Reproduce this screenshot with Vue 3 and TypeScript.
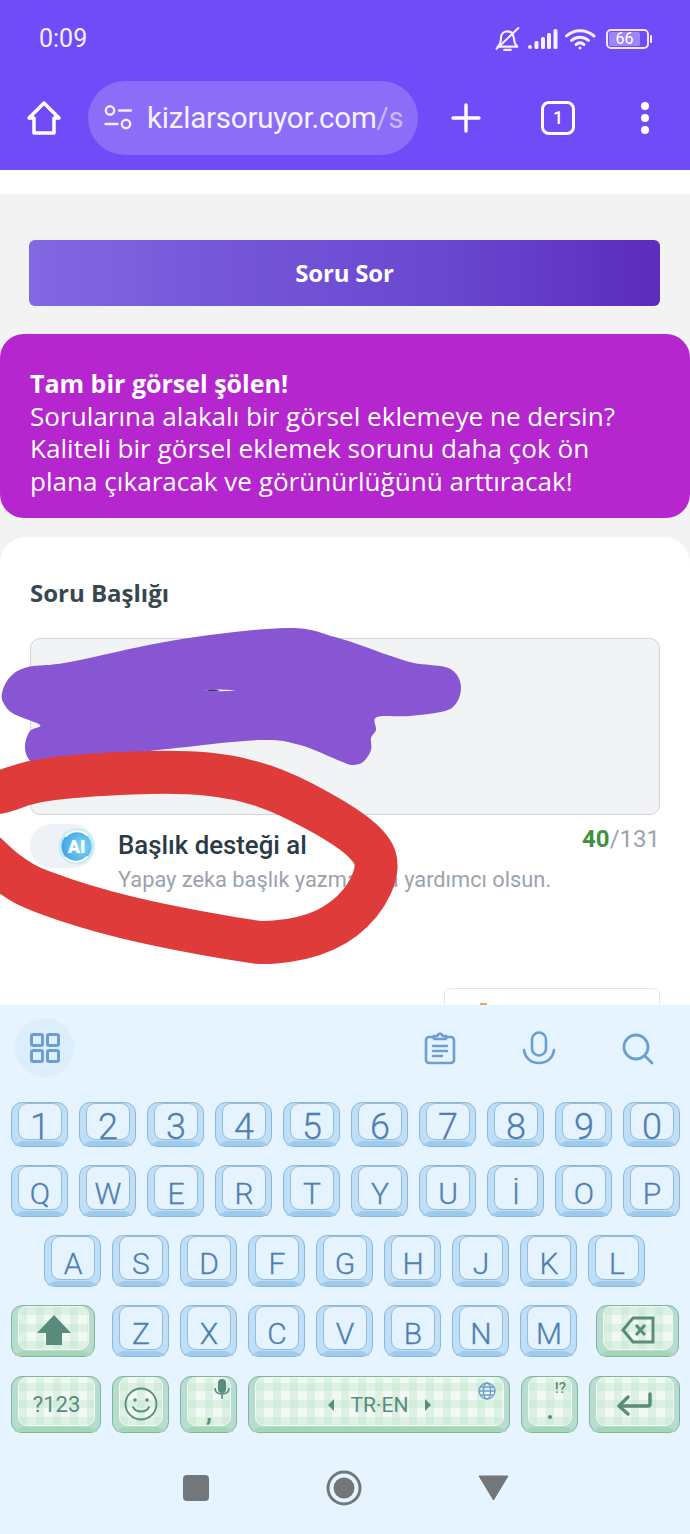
<script setup lang="ts">
type Pt = [number, number]
interface Key { label: string; cls?: string }

function smooth(p: Pt[], closed: boolean): string {
  const n = p.length
  const at = (i: number): Pt => (closed ? p[(i + n) % n] : p[Math.max(0, Math.min(n - 1, i))])
  let d = `M${p[0][0]} ${p[0][1]}`
  const last = closed ? n : n - 1
  for (let i = 0; i < last; i++) {
    const a = at(i - 1), b = at(i), c = at(i + 1), e = at(i + 2)
    const c1x = b[0] + (c[0] - a[0]) / 6, c1y = b[1] + (c[1] - a[1]) / 6
    const c2x = c[0] - (e[0] - b[0]) / 6, c2y = c[1] - (e[1] - b[1]) / 6
    d += `C${c1x.toFixed(1)} ${c1y.toFixed(1)} ${c2x.toFixed(1)} ${c2y.toFixed(1)} ${c[0]} ${c[1]}`
  }
  return closed ? d + 'Z' : d
}

const purple = smooth([
  [2, 693], [10, 677], [28, 667], [70, 662], [176, 640], [286, 628], [335, 637], [388, 655], [414, 663],
  [445, 667], [457, 675], [461, 688], [457, 702], [445, 711], [410, 716], [377, 717], [376, 730], [371, 738],
  [371, 750], [363, 762], [352, 765], [340, 761], [300, 745], [260, 740], [176, 748], [80, 760], [40, 765],
  [28, 758], [25, 745], [30, 731], [40, 725], [14, 714], [4, 704],
], true)

const red = smooth([
  [-40, 800], [0, 792], [44, 780], [132, 773], [207, 774], [264, 786], [320, 812], [364, 842], [376, 868],
  [360, 903], [325, 930], [275, 942], [230, 938], [125, 917], [46, 893], [8, 873], [-30, 838],
], false)

const digits = '1234567890'.split('')
const row2 = ['Q', 'W', 'E', 'R', 'T', 'Y', 'U', 'İ', 'O', 'P']
const row3 = ['A', 'S', 'D', 'F', 'G', 'H', 'J', 'K', 'L']
const row4: Key[] = ['Z', 'X', 'C', 'V', 'B', 'N', 'M'].map((label) => ({ label }))
</script>

<template>
  <div class="page">
    <header class="top">
      <div class="status">
        <span class="clock">0:09</span>
        <div class="status-icons">
          <svg width="25" height="24" viewBox="1 1 22 22" fill="none" stroke="#f3effe" stroke-width="1.900" stroke-linecap="round" stroke-linejoin="round">
            <path d="M3 19h18c-2-2-3-4-3-7l-1-4c-1-2-3-3-5-3-3 0-6 2-6 6 0 4-1 6-3 8Z" />
            <path d="M9 22h6" />
            <path d="M2 21 22 2" />
          </svg>
          <svg class="signal" width="30" height="22" viewBox="0 0 30 22" fill="#f3effe">
            <rect x="0" y="17" width="4" height="4" rx="2" />
            <rect x="6.500" y="13" width="4" height="8" rx="1.500" />
            <rect x="13" y="9" width="4" height="12" rx="1.500" />
            <rect x="19" y="5" width="4" height="16" rx="1.500" />
            <rect x="25.500" y="1" width="4" height="20" rx="1.500" />
          </svg>
          <svg class="wifi" width="32" height="24" viewBox="0 0 32 24" fill="none" stroke="#f3effe" stroke-width="3" stroke-linecap="round">
            <path d="M1.500 9C9 2 21 2 29 9" />
            <path d="M6.500 13.500c5-4.500 12-4.500 17 0" />
            <path d="M11 17.500c2.500-2 5.500-2 8 0" />
            <circle cx="15" cy="21" r="1.500" fill="#f3effe" stroke="none" />
          </svg>
          <div class="battery">
            <div class="cell"><span>66</span></div>
            <i class="nub"></i>
          </div>
        </div>
      </div>
      <div class="toolbar">
        <svg class="home" width="36" height="36" viewBox="0 0 36 36" fill="none" stroke="#fff" stroke-width="3.500" stroke-linejoin="round">
          <path d="M18 3 3 18h5v15h20V18h5L18 3Z" />
        </svg>
        <div class="url">
          <svg width="28" height="27" viewBox="0 0 28 27" fill="none" stroke="#f1edff" stroke-width="2.400" stroke-linecap="round">
            <circle cx="6" cy="6.500" r="4.200" />
            <path d="M15 6.500h12" />
            <path d="M1.500 20h12" />
            <circle cx="22" cy="20" r="4.200" />
          </svg>
          <span class="host">kizlarsoruyor.com<em>/s</em></span>
        </div>
        <svg class="plus" width="30" height="30" viewBox="0 0 30 30" stroke="#fff" stroke-width="3.400" stroke-linecap="round">
          <path d="M15 2v26M2 15h26" />
        </svg>
        <div class="tabs">1</div>
        <div class="dots"><i></i><i></i><i></i></div>
      </div>
    </header>

    <main class="main">
      <div class="white-band"></div>
      <div class="ask">Soru Sor</div>
      <section class="banner">
        <strong>Tam bir görsel şölen!</strong><br />
        Sorularına alakalı bir görsel eklemeye ne dersin?<br />
        Kaliteli bir görsel eklemek sorunu daha çok ön<br />
        plana çıkaracak ve görünürlüğünü arttıracak!
      </section>
      <section class="card">
        <h2>Soru Başlığı</h2>
        <div class="field"></div>
        <div class="helper">
          <div class="toggle">
            <svg width="37" height="37" viewBox="0 0 37 37">
              <defs>
                <radialGradient id="aiFill" cx="0.65" cy="0.5" r="0.7">
                  <stop offset="0" stop-color="#7fdcf3" />
                  <stop offset="1" stop-color="#3b9fe2" />
                </radialGradient>
              </defs>
              <circle cx="18.500" cy="18.500" r="18" fill="#c6ecf9" />
              <circle cx="18.500" cy="18.500" r="15" fill="url(#aiFill)" />
              <path d="M8 8c6-6 15-6 21-1M29 29c-6 6-15 6-21 1" fill="none" stroke="#fff" stroke-width="2" stroke-linecap="round" />
              <text x="18.500" y="25" text-anchor="middle" class="ai-text">AI</text>
            </svg>
          </div>
          <div class="helper-text">
            <div class="h-title">Başlık desteği al</div>
            <div class="h-sub">Yapay zeka başlık yazmanıza yardımcı olsun.</div>
          </div>
          <div class="count"><b>40</b>/131</div>
        </div>
        <div class="next-box"><i></i></div>
      </section>
    </main>

    <section class="kb">
      <div class="kb-tools">
        <div class="grid-btn">
          <svg width="30" height="30" viewBox="0 0 30 30" fill="none" stroke="#6c9fd0" stroke-width="3">
            <rect x="1.500" y="1.500" width="11" height="11" rx="1.500" />
            <rect x="17.500" y="1.500" width="11" height="11" rx="1.500" />
            <rect x="1.500" y="17.500" width="11" height="11" rx="1.500" />
            <rect x="17.500" y="17.500" width="11" height="11" rx="1.500" />
          </svg>
        </div>
        <svg class="t-clip" width="32" height="34" viewBox="0 0 32 34" fill="none" stroke="#6c9fd0" stroke-width="2.600" stroke-linecap="round" stroke-linejoin="round">
          <path d="M9 6H5a3 3 0 0 0-3 3v20a3 3 0 0 0 3 3h22a3 3 0 0 0 3-3V9a3 3 0 0 0-3-3h-4" />
          <path d="M10 8V5h3.500c.5-3 4.500-3 5 0H22v3Z" />
          <path d="M9 15h14M9 20h14M9 25h9" />
        </svg>
        <svg class="t-mic" width="34" height="34" viewBox="0 0 34 34" fill="none" stroke="#6c9fd0" stroke-width="2.600" stroke-linecap="round">
          <rect x="10" y="1.500" width="14" height="23" rx="7" />
          <path d="M2 19c1 8 7 13 15 13s14-5 15-13" />
        </svg>
        <svg class="t-search" width="32" height="32" viewBox="0 0 32 32" fill="none" stroke="#6c9fd0" stroke-width="2.800" stroke-linecap="round">
          <circle cx="14" cy="14" r="12" />
          <path d="m23 23 7 7" />
        </svg>
      </div>

      <div class="row r-digits">
        <div v-for="d in digits" :key="d" class="key blue"><div class="face digit">{{ d }}</div></div>
      </div>
      <div class="row">
        <div v-for="k in row2" :key="k" class="key blue"><div class="face letter">{{ k }}</div></div>
      </div>
      <div class="row r-home">
        <div v-for="k in row3" :key="k" class="key blue"><div class="face letter">{{ k }}</div></div>
      </div>
      <div class="row">
        <div class="key green k-shift">
          <div class="face lowered">
            <svg width="34" height="30" viewBox="0 0 34 30" fill="#5a8c7d"><path d="M17 0 34 18H25V30H9V18H0Z" /></svg>
          </div>
        </div>
        <div v-for="(k, i) in row4" :key="k.label" class="key blue" :class="{ 'k-z': i === 0 }">
          <div class="face letter">{{ k.label }}</div>
        </div>
        <div class="key green k-del">
          <div class="face lowered">
            <svg width="34" height="28" viewBox="0 0 34 28" fill="none" stroke="#5a8c7d" stroke-width="3">
              <path d="M32 2H12L2 14l10 12h20Z" stroke-linejoin="miter" />
              <path d="m15 9 9 10M24 9l-9 10" />
            </svg>
          </div>
        </div>
      </div>
      <div class="row r-last">
        <div class="key green k-num"><div class="face small">?123</div></div>
        <div class="key green">
          <div class="face lowered">
            <svg width="34" height="34" viewBox="0 0 34 34" fill="none" stroke="#5a8c7d" stroke-width="1.800" stroke-linecap="round">
              <circle cx="17" cy="17" r="15.500" />
              <circle cx="11" cy="13" r="1.800" fill="#5a8c7d" stroke="none" />
              <circle cx="23" cy="13" r="1.800" fill="#5a8c7d" stroke="none" />
              <path d="M9 20c3 6 13 6 16 0" />
            </svg>
          </div>
        </div>
        <div class="key green">
          <div class="face">
            <span class="comma">,</span>
            <svg class="hint-mic" width="16" height="21" viewBox="0 0 16 21" fill="none" stroke="#5a8c7d">
              <rect x="4" y="0" width="8" height="14" rx="4" fill="#5a8c7d" stroke="none" />
              <path d="M1 9c0 4 3 6 7 6s7-2 7-6M8 15v5" stroke-width="1.600" />
            </svg>
          </div>
        </div>
        <div class="key green k-space">
          <div class="face small space-face">
            <i class="tri left"></i>
            <span>TR·EN</span>
            <i class="tri right"></i>
            <svg class="globe" width="18" height="18" viewBox="0 0 18 18" fill="none" stroke="#6c9fd0" stroke-width="1.300">
              <circle cx="9" cy="9" r="8" />
              <ellipse cx="9" cy="9" rx="3.600" ry="8" />
              <path d="M1 9h16M2 5h14M2 13h14" />
            </svg>
          </div>
        </div>
        <div class="key green">
          <div class="face">
            <span class="period"></span>
            <span class="hint-text">!?</span>
          </div>
        </div>
        <div class="key green k-enter">
          <div class="face lowered">
            <svg width="36" height="24" viewBox="0 0 36 24" fill="none" stroke="#5a8c7d" stroke-width="3.400" stroke-linecap="round" stroke-linejoin="round">
              <path d="M33 2v10a2 2 0 0 1-2 2H4" />
              <path d="M11 5 2 14l9 8" />
            </svg>
          </div>
        </div>
      </div>

      <nav class="nav">
        <i class="n-square"></i>
        <svg width="36" height="36" viewBox="0 0 36 36">
          <circle cx="18" cy="18" r="16" fill="none" stroke="#73777a" stroke-width="3" />
          <circle cx="18" cy="18" r="10.500" fill="#73777a" />
        </svg>
        <svg width="31" height="26" viewBox="0 0 31 26"><path d="M1 1h29L15.500 25Z" fill="#73777a" stroke="#73777a" stroke-linejoin="round" /></svg>
      </nav>
    </section>

    <svg class="scribble" width="690" height="1534" viewBox="0 0 690 1534">
      <path :d="purple" fill="#8856d2" />
      <path d="M204 690.500q14-2 32 0q-14 1.500-32 0Z" fill="#f2f2f6" />
      <path d="M206 690.500q7-2 14 0q-7 1-14 0Z" fill="#3a3560" />
      <path :d="red" fill="none" stroke="#de3b3a" stroke-width="43" stroke-linecap="round" stroke-linejoin="round" />
    </svg>
  </div>
</template>

<style scoped>
.page {
  position: relative;
  width: 690px;
  height: 1534px;
  display: flex;
  flex-direction: column;
  overflow: hidden;
  background: #f3f3f3;
  font-family: Roboto, sans-serif;
}
.top {
  height: 170px;
  flex: none;
  background: #6f4cf8;
  color: #fff;
}
.status {
  height: 77px;
  padding: 0 38px 0 39px;
  display: flex;
  align-items: center;
  justify-content: space-between;
}
.clock {
  font-size: 25px;
  color: #f3effe;
}
.status-icons {
  display: flex;
  align-items: center;
}
.signal { margin-left: 8px; }
.wifi { margin-left: 7px; }
.battery {
  margin-left: 9px;
  display: flex;
  align-items: center;
}
.cell {
  box-sizing: border-box;
  width: 43px;
  height: 20px;
  border: 2px solid #eee8ff;
  border-radius: 5px;
  padding: 1px;
  display: flex;
}
.cell span {
  width: 31px;
  background: #9c85f9;
  border-radius: 2px;
  font-size: 16px;
  line-height: 14px;
  text-align: center;
  color: #fff;
  white-space: nowrap;
}
.nub {
  width: 2px;
  height: 8px;
  margin-left: 1px;
  background: #eee8ff;
  border-radius: 1px;
}
.toolbar {
  position: relative;
  height: 93px;
  display: flex;
  align-items: center;
  padding-left: 26px;
  margin-top: -6px;
}
.home { flex: none; }
.url {
  box-sizing: border-box;
  width: 330px;
  height: 74px;
  margin-left: 26px;
  padding-left: 16px;
  border-radius: 37px;
  background: #8b6df8;
  display: flex;
  align-items: center;
  flex: none;
}
.host {
  margin-left: 15px;
  font-size: 29.500px;
  line-height: 36px;
  color: #f5f2ff;
  white-space: nowrap;
  letter-spacing: -0.2px;
}
.host em {
  font-style: normal;
  color: #c7b8fb;
}
.plus {
  margin-left: 33px;
  flex: none;
}
.tabs {
  box-sizing: border-box;
  width: 34px;
  height: 34px;
  margin-left: 60px;
  flex: none;
  border: 3px solid #fff;
  border-radius: 8px;
  font-size: 18px;
  font-weight: 500;
  line-height: 28px;
  text-align: center;
  color: #fff;
}
.dots {
  margin-left: 66px;
  display: flex;
  flex-direction: column;
  gap: 4px;
}
.dots i {
  width: 8px;
  height: 8px;
  border-radius: 50%;
  background: #fff;
}
.main {
  flex: 1;
  min-height: 0;
  overflow: hidden;
  font-family: "Open Sans", sans-serif;
}
.white-band {
  height: 24px;
  background: #fff;
}
.ask {
  box-sizing: border-box;
  height: 66px;
  margin: 46px 30px 0 29px;
  border-radius: 6px;
  background: linear-gradient(90deg, #8268e2 0%, #7557d8 30%, #6a48cf 65%, #5b2cbd 100%);
  color: #fff;
  font-size: 24px;
  font-weight: 700;
  letter-spacing: -0.2px;
  line-height: 66px;
  text-align: center;
}
.banner {
  box-sizing: border-box;
  height: 184px;
  margin-top: 28px;
  padding: 33px 30px 0;
  border-radius: 24px;
  background: #b526cf;
  color: #fff;
  font-size: 26.100px;
  line-height: 32.700px;
  white-space: nowrap;
}
.banner strong {
  font-size: 25px;
  font-weight: 700;
}
.card {
  margin-top: 19px;
  height: 520px;
  padding: 39px 30px 0;
  box-sizing: border-box;
  border-radius: 26px 26px 0 0;
  background: #fff;
}
.card h2 {
  margin: 0;
  font-size: 24px;
  line-height: 33px;
  font-weight: 700;
  color: #37474f;
}
.field {
  box-sizing: border-box;
  height: 177px;
  margin-top: 29px;
  background: #f2f3f5;
  border: 1.500px solid #cfd3d8;
  border-radius: 10px;
}
.helper {
  display: flex;
  align-items: flex-start;
  margin-top: 9px;
  font-family: Roboto, sans-serif;
}
.toggle {
  box-sizing: border-box;
  width: 65px;
  height: 44px;
  flex: none;
  border-radius: 22px;
  background: #eef1f5;
  display: flex;
  align-items: center;
  justify-content: flex-end;
}
.ai-text {
  font-family: Roboto, sans-serif;
  font-size: 18px;
  font-weight: 900;
  fill: #fff;
}
.helper-text {
  margin-left: 23px;
  flex: 1;
}
.h-title {
  font-size: 25.800px;
  line-height: 30px;
  margin-top: 6px;
  font-weight: 500;
  color: #2c3a47;
}
.h-sub {
  margin-top: 5px;
  font-size: 21.800px;
  line-height: 30px;
  color: #9aa3ae;
  white-space: nowrap;
}
.count {
  font-size: 24px;
  line-height: 30px;
  color: #9aa3ae;
}
.count b {
  color: #3f9142;
  font-weight: 700;
}
.next-box {
  position: absolute;
  left: 444px;
  top: 988px;
  width: 216px;
  height: 40px;
  box-sizing: border-box;
  border: 1.500px solid #e6e6e6;
  border-radius: 6px;
  background: #fff;
}
.next-box i {
  position: absolute;
  left: 35px;
  top: 14px;
  width: 7px;
  height: 4px;
  background: #e8a458;
}
.kb {
  position: relative;
  height: 529px;
  flex: none;
  background: #e5f4ff;
  display: flex;
  flex-direction: column;
}
.kb-tools {
  height: 97px;
  flex: none;
  display: flex;
  align-items: flex-start;
  padding: 13px 0 0 15px;
  box-sizing: border-box;
}
.grid-btn {
  width: 59px;
  height: 59px;
  border-radius: 50%;
  background: #dcedfb;
  display: flex;
  align-items: center;
  justify-content: center;
}
.t-clip { margin: 13px 0 0 350px; }
.t-mic { margin: 13px 0 0 66px; }
.t-search { margin: 15px 0 0 66px; }
.row {
  height: 52px;
  flex: none;
  display: flex;
  gap: 11px;
  padding-left: 11px;
  margin-bottom: 18px;
}
.r-digits { height: 45px; }
.r-home { padding-left: 44px; }
.r-last {
  height: 57px;
  margin-top: 1px;
  margin-bottom: 0;
}
.key {
  position: relative;
  box-sizing: border-box;
  flex: 0 0 57px;
  border-radius: 11px;
  border: 1.500px solid;
  padding: 0 5px 6px 6px;
  display: flex;
}
.key::after {
  content: "";
  position: absolute;
  left: 0;
  right: 0;
  bottom: 0;
  height: 5px;
  border-radius: 0 0 9px 9px;
  clip-path: polygon(10px 0, calc(100% - 10px) 0, 100% 100%, 0 100%);
}
.blue {
  border-color: #8db7d8;
  background: #bfdef7;
}
.blue::after { background: #9ecaee; }
.green {
  border-color: #82b497;
  background: #b7ddd0;
}
.green::after { background: #a5d6b5; }
.face {
  position: relative;
  flex: 1;
  min-width: 0;
  display: flex;
  align-items: center;
  justify-content: center;
  border-radius: 9px;
  box-sizing: border-box;
  border: 1.500px solid;
  border-top-width: 1px;
  color: #4f7faf;
}
.blue .face {
  background: #e4f3fe;
  border-color: #95bdd7;
}
.green .face {
  color: #5a8c7d;
  border-color: #f0f8f3;
  background-color: #f0f9f3;
  background-image:
    repeating-linear-gradient(90deg, rgba(188, 226, 200, 0.36) 0 8px, transparent 8px 17px),
    repeating-linear-gradient(0deg, rgba(188, 226, 200, 0.36) 0 8px, transparent 8px 17px);
}
.digit {
  font-size: 36px;
  padding-top: 11px;
  font-weight: 300;
  -webkit-text-stroke: 0.3px #4f7faf;
}
.letter {
  font-size: 30px;
  padding-top: 10px;
  font-weight: 300;
  -webkit-text-stroke: 0.3px #4f7faf;
}
.small {
  font-size: 22px;
  padding-top: 6px;
}
.lowered { padding-top: 4px; }
.k-shift { flex-basis: 84px; }
.k-z { margin-left: 6px; }
.k-del {
  flex-basis: 83px;
  margin-left: 8px;
}
.k-num { flex-basis: 90px; }
.k-space { flex-basis: 262px; }
.k-enter { flex-basis: 91px; }
.space-face {
  gap: 17px;
  font-size: 21px;
}
.tri {
  width: 0;
  height: 0;
  border-top: 6px solid transparent;
  border-bottom: 6px solid transparent;
}
.tri.left { border-right: 6px solid #5a8c7d; }
.tri.right { border-left: 6px solid #5a8c7d; }
.globe {
  position: absolute;
  right: 7px;
  top: 4px;
}
.comma {
  font-size: 24px;
  font-weight: 700;
  line-height: 24px;
  margin-top: 22px;
}
.hint-mic {
  position: absolute;
  right: 0;
  top: 1px;
}
.period {
  width: 4px;
  height: 4px;
  margin-top: 30px;
  border-radius: 50%;
  background: #5a8c7d;
}
.hint-text {
  position: absolute;
  right: 5px;
  top: 1px;
  font-size: 15px;
  font-weight: 500;
}
.nav {
  flex: 1;
  display: flex;
  align-items: center;
  padding: 9px 181px 0 183px;
  justify-content: space-between;
}
.n-square {
  width: 26px;
  height: 26px;
  border-radius: 4px;
  background: #73777a;
}
.scribble {
  position: absolute;
  left: 0;
  top: 0;
  pointer-events: none;
}
</style>
